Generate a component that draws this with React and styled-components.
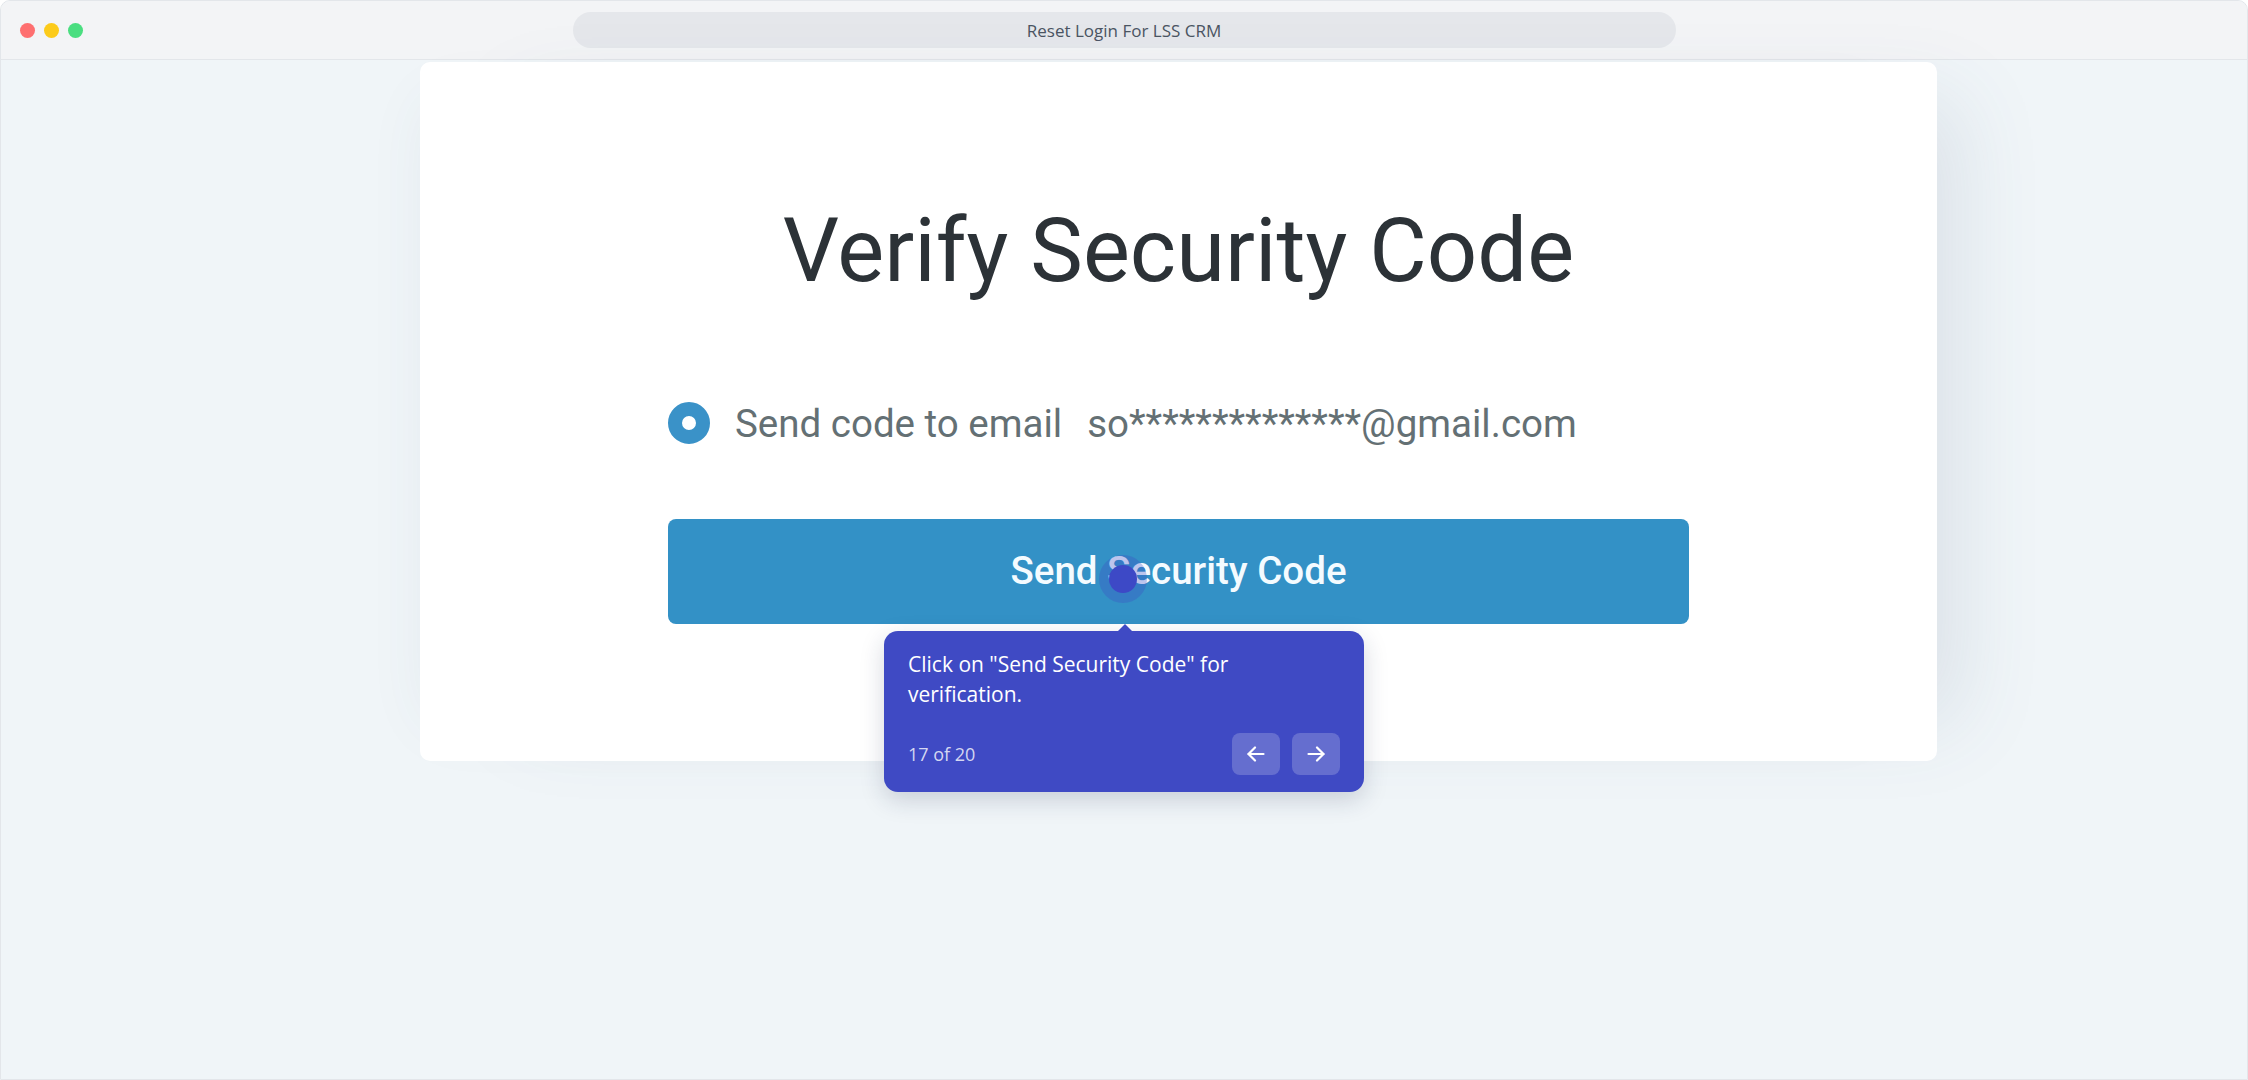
import React from "react";
import styled, { createGlobalStyle } from "styled-components";

const GlobalStyle = createGlobalStyle`
  html, body {
    margin: 0;
    padding: 0;
    background: #ffffff;
  }
  * {
    box-sizing: border-box;
  }
`;

const Frame = styled.div`
  display: flex;
  flex-direction: column;
  width: 100vw;
  height: 100vh;
  border: 1px solid #e3e6ea;
  border-radius: 10px 10px 0 0;
  overflow: hidden;
  background-color: #f0f5f8;
`;

const TitleBar = styled.header`
  display: grid;
  grid-template-columns: 1fr 1103px 1fr;
  align-items: center;
  height: 59px;
  flex-shrink: 0;
  background-color: #f3f4f6;
  border-bottom: 1px solid #e3e6ea;
`;

const Dots = styled.div`
  display: flex;
  align-items: center;
  gap: 9px;
  padding-left: 19px;
`;

const Dot = styled.span`
  width: 15px;
  height: 15px;
  border-radius: 50%;
  background-color: ${(p) => p.color};
`;

const UrlBar = styled.div`
  display: flex;
  align-items: center;
  justify-content: center;
  height: 36px;
  border-radius: 18px;
  background-color: #e5e7eb;
  color: #4b5563;
  font-family: "Open Sans", "Liberation Sans", sans-serif;
  font-size: 17px;
`;

const Content = styled.main`
  flex: 1;
  padding: 2px 0 0 419px;
`;

const Card = styled.section`
  display: flex;
  flex-direction: column;
  align-items: center;
  width: 1517px;
  padding: 137px 0;
  background-color: #ffffff;
  border-radius: 10px;
  box-shadow: 60px 0 80px -40px rgba(70, 95, 120, 0.13),
    -30px 0 60px -40px rgba(70, 95, 120, 0.08);
  font-family: Roboto, "Liberation Sans", sans-serif;
`;

const Title = styled.h1`
  margin: 0;
  font-size: 88.5px;
  line-height: 104px;
  font-weight: 400;
  color: #2c3237;
`;

const RadioRow = styled.label`
  display: flex;
  align-items: center;
  gap: 25px;
  width: 1021px;
  height: 48px;
  margin-top: 96px;
  font-size: 38.5px;
  color: #647074;
`;

const Radio = styled.span`
  width: 42px;
  height: 42px;
  flex-shrink: 0;
  border-radius: 50%;
  border: 14px solid #3a92c8;
  background-color: #ffffff;
`;

const ButtonWrap = styled.div`
  position: relative;
  width: 1021px;
  margin-top: 72px;
`;

const PrimaryButton = styled.button`
  display: flex;
  align-items: center;
  justify-content: center;
  width: 100%;
  height: 105px;
  border: none;
  border-radius: 8px;
  background-color: #3391c6;
  color: #f4fbff;
  font-family: Roboto, "Liberation Sans", sans-serif;
  font-size: 38.5px;
  font-weight: 500;
  padding: 0 0 3px;
`;

const Hotspot = styled.span`
  position: absolute;
  left: 455px;
  top: 60px;
  width: 48px;
  height: 48px;
  margin: -24px 0 0 -24px;
  border-radius: 50%;
  background-color: rgba(63, 74, 196, 0.3);
  display: flex;
  align-items: center;
  justify-content: center;

  &::after {
    content: "";
    width: 28px;
    height: 28px;
    border-radius: 50%;
    background-color: #3d49c6;
  }
`;

const Tooltip = styled.div`
  position: absolute;
  left: 216px;
  top: calc(100% + 7px);
  width: 480px;
  padding: 18px 24px 17px;
  border-radius: 14px;
  background-color: #3f4ac4;
  color: #ffffff;
  font-family: "Open Sans", "Liberation Sans", sans-serif;
  box-shadow: 0 8px 24px rgba(30, 40, 80, 0.18);

  &::before {
    content: "";
    position: absolute;
    left: 233px;
    top: -7px;
    border-left: 8px solid transparent;
    border-right: 8px solid transparent;
    border-bottom: 8px solid #3f4ac4;
  }
`;

const TipText = styled.p`
  margin: 0;
  max-width: 390px;
  font-size: 21px;
  line-height: 30px;
`;

const TipFooter = styled.div`
  display: flex;
  align-items: center;
  justify-content: space-between;
  margin-top: 24px;
`;

const StepCount = styled.span`
  font-size: 18px;
  color: rgba(255, 255, 255, 0.78);
`;

const NavButtons = styled.div`
  display: flex;
  gap: 12px;
`;

const NavButton = styled.button`
  display: flex;
  align-items: center;
  justify-content: center;
  width: 48px;
  height: 42px;
  padding: 0;
  border: none;
  border-radius: 8px;
  background-color: rgba(255, 255, 255, 0.2);
  cursor: pointer;
`;

const Arrow = ({ dir }) => (
  <svg width="18" height="16" viewBox="0 0 18 16" fill="none">
    <g
      stroke="#ffffff"
      strokeWidth="2.2"
      strokeLinecap="round"
      strokeLinejoin="round"
      transform={dir === "right" ? "translate(18 0) scale(-1 1)" : undefined}
    >
      <path d="M16.5 8H1.5" />
      <path d="M8 1.5L1.5 8L8 14.5" />
    </g>
  </svg>
);

const App = () => {
  return (
    <>
      <GlobalStyle />
      <Frame>
        <TitleBar>
          <Dots>
            <Dot color="#fe6f70" />
            <Dot color="#fccb1b" />
            <Dot color="#4ade80" />
          </Dots>
          <UrlBar>Reset Login For LSS CRM</UrlBar>
        </TitleBar>
        <Content>
          <Card>
            <Title>Verify Security Code</Title>
            <RadioRow>
              <Radio />
              <span>Send code to email</span>
              <span>so**************@gmail.com</span>
            </RadioRow>
            <ButtonWrap>
              <PrimaryButton>Send Security Code</PrimaryButton>
              <Hotspot />
              <Tooltip>
                <TipText>Click on "Send Security Code" for verification.</TipText>
                <TipFooter>
                  <StepCount>17 of 20</StepCount>
                  <NavButtons>
                    <NavButton aria-label="Previous">
                      <Arrow dir="left" />
                    </NavButton>
                    <NavButton aria-label="Next">
                      <Arrow dir="right" />
                    </NavButton>
                  </NavButtons>
                </TipFooter>
              </Tooltip>
            </ButtonWrap>
          </Card>
        </Content>
      </Frame>
    </>
  );
};

export default App;
